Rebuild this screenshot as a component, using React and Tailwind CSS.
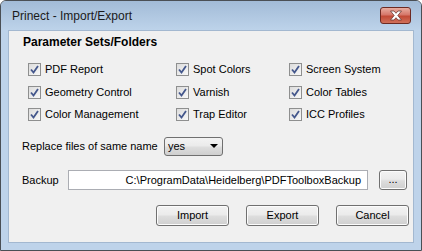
import { ChevronDown } from 'lucide-react'

const options = [
  ['PDF Report', 'Spot Colors', 'Screen System'],
  ['Geometry Control', 'Varnish', 'Color Tables'],
  ['Color Management', 'Trap Editor', 'ICC Profiles'],
]

const btn =
  'flex items-center justify-center rounded-[3px] border border-[#707070] bg-[linear-gradient(to_bottom,#f3f3f3_0%,#ebebeb_45%,#dddddd_55%,#cfcfcf_100%)] shadow-[inset_0_0_0_1px_#fcfcfc] text-[11px] text-black'

function Check({ label }) {
  return (
    <div className="flex items-center gap-[3px]">
      <div className="flex h-[13px] w-[13px] items-center justify-center border border-[#8e8f8f] bg-[linear-gradient(135deg,#dcdcdc,#f8f8f8)]">
        <svg width="9" height="9" viewBox="0 0 9 9">
          <path d="M1 4.5 L3.5 7.5 L8 1" fill="none" stroke="#44578c" strokeWidth="1.8" />
        </svg>
      </div>
      <span className="pl-[1px]">{label}</span>
    </div>
  )
}

export default function App() {
  return (
    <div className="flex h-[251px] w-[422px] flex-col overflow-hidden rounded-t-[6px] border border-[#4a4f55] bg-[#bed3ea] font-['Liberation_Sans',Arial,sans-serif] text-[11px] text-black">
      <div className="flex h-[29px] shrink-0 items-center justify-between bg-[linear-gradient(to_bottom,#a2bbd7,#bdd3ea)] pl-[11px] pr-[10px]">
        <span className="text-[12px] text-[#1a1a1a]">Prinect - Import/Export</span>
        <div className="flex h-[17px] w-[31px] items-center justify-center rounded-[3px] border border-[#6d2a22] bg-[linear-gradient(to_bottom,#e8ada0_0%,#d6776a_45%,#c24a36_55%,#d0705a_100%)]">
          <svg width="14" height="11" viewBox="0 0 14 11">
            <path
              d="M1.5 1 L5 1 L7 3.3 L9 1 L12.5 1 L8.8 5.5 L12.5 10 L9 10 L7 7.7 L5 10 L1.5 10 L5.2 5.5 Z"
              fill="#ffffff"
              stroke="#6b3a35"
              strokeWidth="0.8"
            />
          </svg>
        </div>
      </div>

      <div className="mx-[7px] mb-[7px] flex flex-1 flex-col border border-[#a3b8d0] bg-[#f0f0f0]">
        <div className="flex h-[22px] items-center pl-[14px] text-[12px] font-bold">Parameter Sets/Folders</div>

        <div className="mt-[5px] flex flex-col">
          {options.map((row, i) => (
            <div key={i} className={`grid grid-cols-[148px_113px_1fr] items-center pl-[19px] ${i === 0 ? 'h-[23px]' : 'h-[22px]'}`}>
              {row.map(l => (
                <Check key={l} label={l} />
              ))}
            </div>
          ))}
        </div>

        <div className="mt-[11px] flex h-[20px] items-center pl-[13px]">
          <span className="w-[142px]">Replace files of same name</span>
          <div className="flex h-[19px] w-[59px] items-center justify-between rounded-[3px] border border-[#707070] bg-[linear-gradient(to_bottom,#f3f3f3_0%,#ebebeb_45%,#dddddd_55%,#cfcfcf_100%)] pl-[3px] pr-[4px]">
            <span>yes</span>
            <svg width="8" height="4" viewBox="0 0 8 4">
              <path d="M0 0 L8 0 L4 4 Z" fill="#000" />
            </svg>
          </div>
        </div>

        <div className="mt-[14px] flex h-[20px] items-center pl-[13px]">
          <span className="w-[46px]">Backup</span>
          <div className="flex h-[20px] w-[300px] items-center justify-end border border-[#abadb3] border-t-[#abadb3] bg-white pr-[6px]">
            C:\ProgramData\Heidelberg\PDFToolboxBackup
          </div>
          <div className={`${btn} ml-[11px] h-[20px] w-[28px] pb-[2px] text-[10px]`}>...</div>
        </div>

        <div className="mt-[15px] flex h-[21px] justify-end gap-[17px] pr-[4px]">
          <div className={`${btn} w-[73px]`}>Import</div>
          <div className={`${btn} w-[73px]`}>Export</div>
          <div className={`${btn} w-[73px]`}>Cancel</div>
        </div>
      </div>
    </div>
  )
}
